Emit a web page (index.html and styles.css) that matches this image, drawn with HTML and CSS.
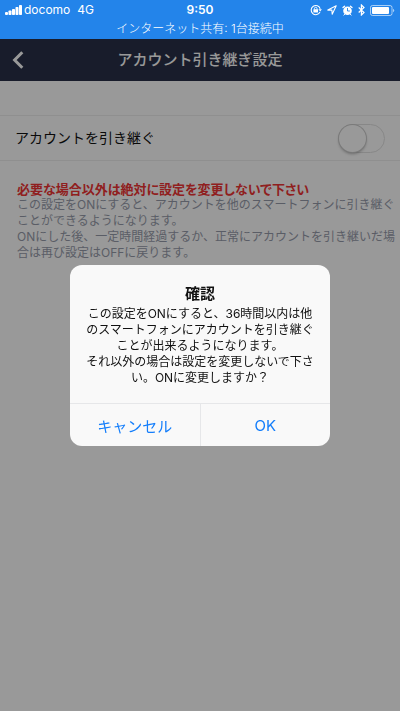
FILE: index.html
```html
<!DOCTYPE html>
<html lang="ja">
<head>
    <meta charset="UTF-8">
    <meta name="viewport" content="width=device-width, initial-scale=1.0">
    <title>アカウント引き継ぎ設定</title>
    <link rel="stylesheet" href="styles.css">
</head>
<body>

<div class="status-bar">
    <div class="status-row">
        <div class="status-left">
            <svg width="17" height="10" viewBox="0 0 17 10" fill="#fff">
                <rect x="0" y="7" width="3" height="3" rx="1"/>
                <rect x="3.5" y="5.5" width="3" height="4.5" rx="0.8"/>
                <rect x="7" y="4" width="3" height="6" rx="0.8"/>
                <rect x="10.5" y="2" width="3" height="8" rx="0.8"/>
                <rect x="14" y="0" width="3" height="10" rx="0.8"/>
            </svg>
            <span>docomo</span>
            <span class="network">4G</span>
        </div>
        <div class="time">9:50</div>
        <div class="status-right">
            <!-- rotation lock -->
            <svg width="12" height="12" viewBox="0 0 12 12" fill="none" stroke="#fff">
                <path d="M10 7.9A4.6 4.6 0 1 1 10.2 4.8" stroke-width="1.1"/>
                <path d="M8.4 5.2h3.5L10.2 7.6z" fill="#fff" stroke="none"/>
                <rect x="3.4" y="5.2" width="4.6" height="3.4" rx="0.4" fill="#fff" stroke="none"/>
                <path d="M4.4 5.6V4.6a1.3 1.3 0 0 1 2.6 0v1" stroke-width="0.9"/>
            </svg>
            <!-- location -->
            <svg width="10" height="10" viewBox="0 0 10 10" fill="none" stroke="#fff" stroke-width="1.1" stroke-linejoin="round">
                <path d="M.8 5.1L9.2.8 5.2 9.2 4.9 5.1z"/>
            </svg>
            <!-- alarm -->
            <svg width="11" height="11" viewBox="0 0 11 11" fill="none" stroke="#fff" stroke-linecap="round">
                <circle cx="5.5" cy="5.8" r="4.3" fill="#fff" stroke="none"/>
                <path d="M1 2.6L2.6 1.2M10 2.6L8.4 1.2" stroke-width="1.3"/>
                <path d="M2.6 9.3l-.7.8M8.4 9.3l.7.8"/>
                <path d="M5.5 3.4v2.6h2" stroke="#2384ea" stroke-width="0.9"/>
            </svg>
            <!-- bluetooth -->
            <svg width="7" height="12" viewBox="0 0 7 12" fill="none" stroke="#fff" stroke-width="1.2">
                <path d="M.7 3.5l5.3 5L3.4 11V1L6 3.5l-5.3 5"/>
            </svg>
            <!-- battery -->
            <svg width="25" height="11" viewBox="0 0 25 11" fill="none">
                <rect x="0.5" y="0.5" width="21.5" height="10" rx="2" stroke="#fff" stroke-opacity="0.6"/>
                <rect x="2" y="2" width="17" height="7" rx="1" fill="#fff"/>
                <path d="M23 3.8a1.8 1.8 0 0 1 0 3.4z" fill="#fff" fill-opacity="0.6"/>
            </svg>
        </div>
    </div>
    <div class="tethering">インターネット共有: 1台接続中</div>
</div>

<header class="nav-bar">
    <button class="back" aria-label="戻る">
        <svg width="12" height="18" viewBox="0 0 12 18" fill="none" stroke="#fff" stroke-width="3">
            <path d="M10.3 1.2L2.6 9l7.7 7.8"/>
        </svg>
    </button>
    <h1>アカウント引き継ぎ設定</h1>
</header>

<main>
    <div class="setting-row">
        <label for="transfer">アカウントを引き継ぐ</label>
        <input type="checkbox" id="transfer" class="switch">
    </div>
    <div class="notes">
        <strong>必要な場合以外は絶対に設定を変更しないで下さい</strong>
        <p>この設定をONにすると、アカウントを他のスマートフォンに引き継ぐ<br>ことができるようになります。<br>ONにした後、一定時間経過するか、正常にアカウントを引き継いだ場<br>合は再び設定はOFFに戻ります。</p>
    </div>
</main>

<div class="backdrop">
    <div class="dialog" role="alertdialog" aria-labelledby="dialogTitle" aria-describedby="dialogText">
        <h2 id="dialogTitle">確認</h2>
        <p id="dialogText">この設定をONにすると、36時間以内は他<br>のスマートフォンにアカウントを引き継ぐ<br>ことが出来るようになります。<br>それ以外の場合は設定を変更しないで下さ<br>い。ONに変更しますか？</p>
        <div class="buttons">
            <button>キャンセル</button>
            <button>OK</button>
        </div>
    </div>
</div>

</body>
</html>
```
FILE: styles.css
```css
* {
    box-sizing: border-box;
}
body {
    margin: 0;
    min-height: 100vh;
    background-color: #fff;
    color: #111;
    font-family: Inter, 'Noto Sans CJK JP', sans-serif;
    font-size: 12px;
    line-height: 16px;
}
h1, h2, p {
    margin: 0;
}
button {
    padding: 0;
    border: none;
    background: none;
    font-family: inherit;
    cursor: pointer;
}
svg {
    display: block;
}

/* status bar stays above the dimmed page */
.status-bar {
    position: relative;
    z-index: 2;
    height: 39px;
    padding-top: 2px;
    background-color: #2384ea;
    color: #fff;
}
.status-row {
    display: grid;
    grid-template-columns: 1fr auto 1fr;
    align-items: center;
    height: 16px;
    padding: 0 5px;
}
.status-left, .status-right {
    display: flex;
    align-items: center;
}
.status-left {
    gap: 2px;
}
.status-right {
    justify-content: flex-end;
    gap: 5px;
}
.network {
    margin-left: 5px;
}
.time {
    font-weight: 600;
}
.tethering {
    padding-top: 3px;
    text-align: center;
    font-weight: 300;
}

.nav-bar {
    display: grid;
    grid-template-columns: 36px 1fr 36px;
    align-items: center;
    height: 42px;
    background-color: #283048;
    color: #fff;
}
.back {
    display: flex;
    justify-content: center;
    padding: 8px 0;
}
h1 {
    text-align: center;
    font-size: 15px;
    line-height: 20px;
    font-weight: 500;
}

main {
    padding-top: 34px;
}
.setting-row {
    display: flex;
    align-items: center;
    justify-content: space-between;
    height: 46px;
    padding: 0 15px;
    border-top: 1px solid #eee;
    border-bottom: 1px solid #eee;
    font-size: 14px;
}
.switch {
    appearance: none;
    width: 47px;
    height: 29px;
    margin: 0;
    border: 1px solid #e2e2e2;
    border-radius: 15px;
}
.switch::before {
    content: "";
    display: block;
    width: 27px;
    height: 27px;
    border-radius: 50%;
    background-color: #fff;
    box-shadow: 0 0 0 1px #ccc, 0 2px 3px rgba(0, 0, 0, 0.3);
}
.switch:checked::before {
    margin-left: 18px;
}
.notes {
    padding: 20px 17px;
    white-space: nowrap;
}
.notes strong {
    display: block;
    color: #f03535;
    font-size: 13px;
    font-feature-settings: "palt";
}
.notes p {
    color: #979cab;
}

.backdrop {
    position: fixed;
    inset: 0;
    z-index: 1;
    display: flex;
    align-items: center;
    justify-content: center;
    background-color: rgba(0, 0, 0, 0.4);
}
.dialog {
    width: 65%;
    max-width: 320px;
    padding-top: 19px;
    border-radius: 12px;
    background-color: #f9f9f9;
    text-align: center;
    overflow: hidden;
}
h2 {
    margin-bottom: 2px;
    font-size: 15px;
    line-height: 20px;
}
.dialog p {
    margin-bottom: 17px;
    white-space: nowrap;
}
.buttons {
    display: flex;
    border-top: 1px solid #e6e7e9;
}
.buttons button {
    flex: 1;
    height: 42px;
    color: #147efb;
    font-size: 15px;
}
.buttons button + button {
    border-left: 1px solid #e6e7e9;
}
```
